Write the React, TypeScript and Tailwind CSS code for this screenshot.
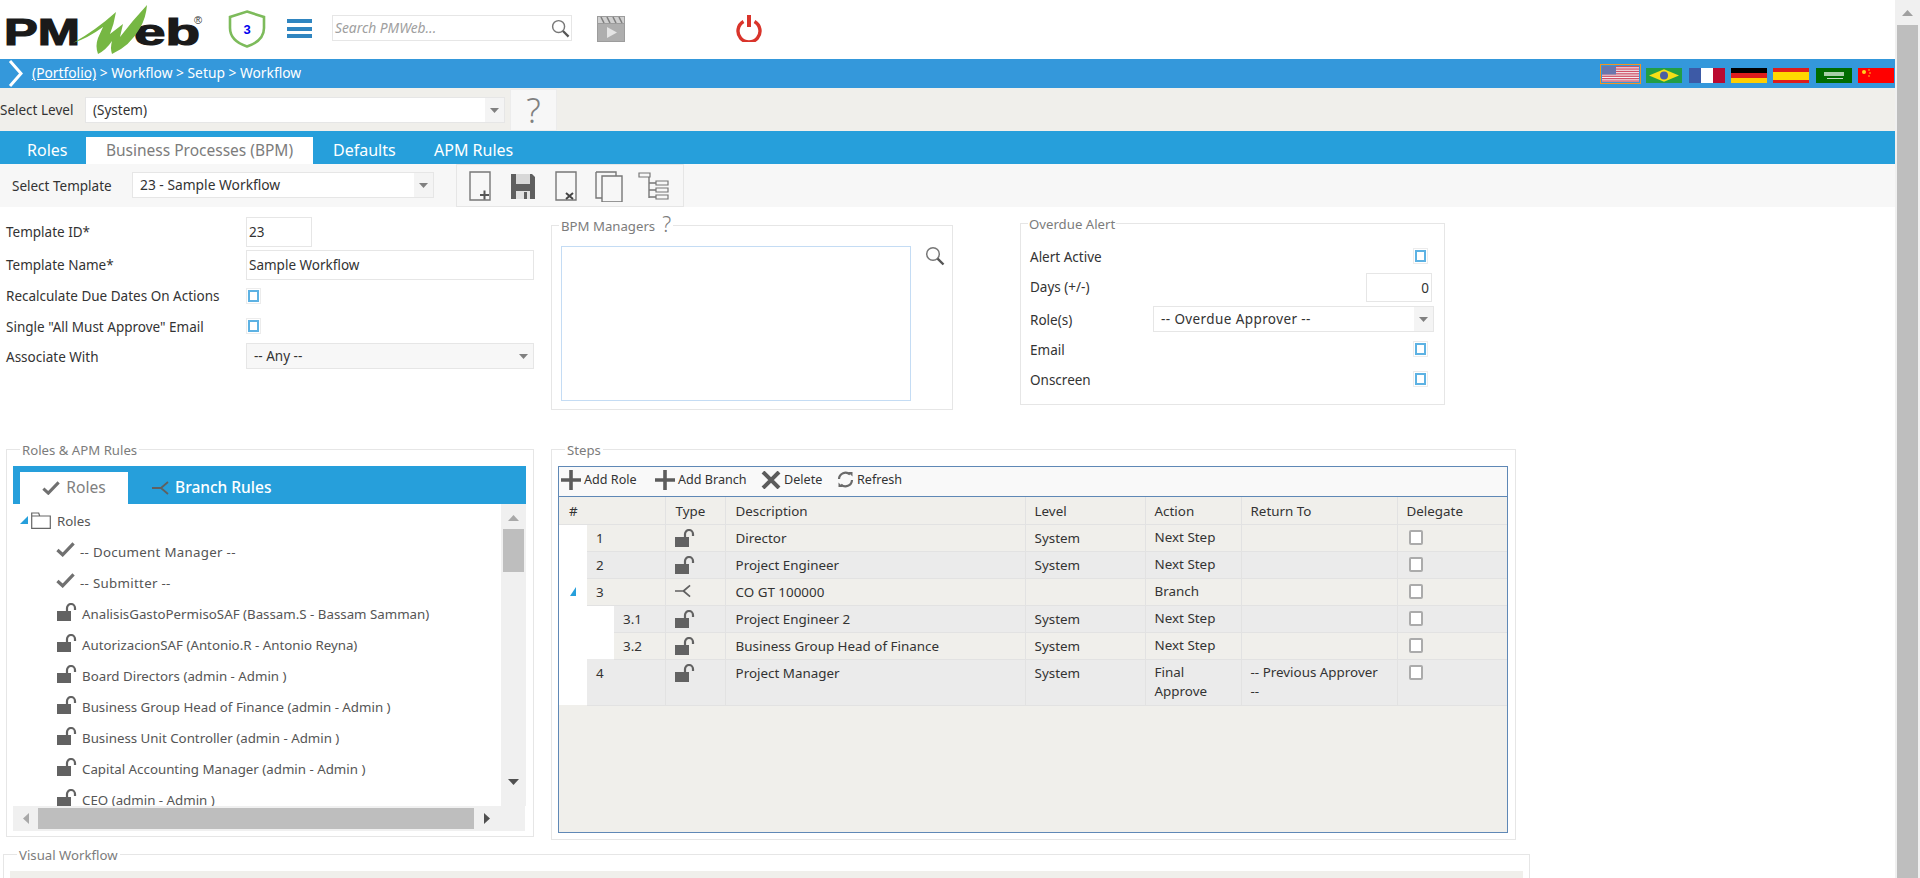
import React from "react";

const roleRows = [
  "AnalisisGastoPermisoSAF (Bassam.S - Bassam Samman)",
  "AutorizacionSAF (Antonio.R - Antonio Reyna)",
  "Board Directors (admin - Admin )",
  "Business Group Head of Finance (admin - Admin )",
  "Business Unit Controller (admin - Admin )",
  "Capital Accounting Manager (admin - Admin )",
  "CEO (admin - Admin )",
];

const steps = [
  { no: "1", desc: "Director", level: "System", action: "Next Step" },
  { no: "2", desc: "Project Engineer", level: "System", action: "Next Step" },
  { no: "3", desc: "CO GT 100000", level: "", action: "Branch", branch: true },
  { no: "3.1", desc: "Project Engineer 2", level: "System", action: "Next Step", sub: true },
  { no: "3.2", desc: "Business Group Head of Finance", level: "System", action: "Next Step", sub: true },
  { no: "4", desc: "Project Manager", level: "System", action: "Final Approve", ret: "-- Previous Approver --", tall: true },
];

function Lock({ className = "" }: { className?: string }) {
  return (
    <svg width="20" height="18" viewBox="0 0 20 18" className={className}>
      <rect x="0" y="8" width="14" height="10" fill="#626262" />
      <path d="M10 8V5a4 4 0 0 1 8 0v2" fill="none" stroke="#626262" strokeWidth="2.2" />
    </svg>
  );
}

function Check({ size = 20 }: { size?: number }) {
  return (
    <svg width={size} height={size * 0.8} viewBox="0 0 20 16">
      <path d="M1.5 8.5l5.5 5L18.5 1.500" fill="none" stroke="#707070" strokeWidth="3.4" />
    </svg>
  );
}

function BranchIcon({ w = 17, h = 14, color = "#606060" }: { w?: number; h?: number; color?: string }) {
  return (
    <svg width={w} height={h} viewBox="0 0 17 14">
      <path d="M0 7h9M9 7l7-6M9 7l7 6" fill="none" stroke={color} strokeWidth="1.8" />
    </svg>
  );
}

function Magnifier({ size = 20 }: { size?: number }) {
  return (
    <svg width={size} height={size} viewBox="0 0 20 20">
      <circle cx="8" cy="8" r="6.3" fill="none" stroke="#777" strokeWidth="1.5" />
      <path d="M12.6 12.6L18.5 18.5" stroke="#555" strokeWidth="2.4" />
    </svg>
  );
}

function Caret({ up, color = "#777", w = 11, h = 6 }: { up?: boolean; color?: string; w?: number; h?: number }) {
  return (
    <svg width={w} height={h} viewBox="0 0 11 6">
      <path d={up ? "M0 6L5.5 0L11 6Z" : "M0 0H11L5.5 6Z"} fill={color} />
    </svg>
  );
}

function Dropdown({ text, className, arrow = "bg-[#f4f4f4]", textClass = "text-[13.5px]" }: { text: string; className: string; arrow?: string; textClass?: string }) {
  return (
    <div className={`flex items-stretch border border-[#e6e6e6] ${className}`}>
      <div className={`flex-1 flex items-center pl-[7px] text-[#333] ${textClass}`}>{text}</div>
      <div className={`w-[19px] flex items-center justify-center ${arrow}`}>
        <Caret color="#808080" w={9} h={5} />
      </div>
    </div>
  );
}

function BlueCheck() {
  return (
    <div className="w-[15px] h-[16px] border border-[#ececec] flex items-center justify-center bg-white">
      <div className="w-[11px] h-[12px] border-2 border-[#5db2e3] bg-white" />
    </div>
  );
}

function Flags() {
  return (
    <div className="flex items-center h-full">
      <div className="w-[41px] h-[20px] border border-[#f5941f] flex items-center justify-center mr-[5px]">
        <svg width="37" height="16" viewBox="0 0 37 16">
          <rect width="37" height="16" fill="#f4f0f2" />
          {[0, 2.4, 4.8, 7.2, 9.6, 12, 14.4].map((y) => (
            <rect key={y} y={y} width="37" height="1.3" fill="#cf5068" />
          ))}
          <rect width="14" height="8.5" fill="#6a76ad" />
        </svg>
      </div>
      <svg width="36" height="15" viewBox="0 0 36 15" className="mr-[7px] mt-[3px]">
        <rect width="36" height="15" fill="#229e45" />
        <path d="M3 7.5L18 1.2L33 7.5L18 13.8Z" fill="#f6df17" />
        <circle cx="18" cy="7.5" r="4" fill="#4a5fa0" />
      </svg>
      <svg width="36" height="15" viewBox="0 0 36 15" className="mr-[6px] mt-[3px]">
        <rect width="12" height="15" fill="#3d5aa6" />
        <rect x="12" width="12" height="15" fill="#fff" />
        <rect x="24" width="12" height="15" fill="#bb0a30" />
      </svg>
      <svg width="36" height="15" viewBox="0 0 36 15" className="mr-[6px] mt-[3px]">
        <rect width="36" height="5" fill="#000" />
        <rect y="5" width="36" height="5" fill="#dd1c1c" />
        <rect y="10" width="36" height="5" fill="#ffce00" />
      </svg>
      <svg width="36" height="15" viewBox="0 0 36 15" className="mr-[7px] mt-[3px]">
        <rect width="36" height="15" fill="#dd1c1c" />
        <rect y="4" width="36" height="8" fill="#ffd800" />
      </svg>
      <svg width="36" height="15" viewBox="0 0 36 15" className="mr-[6px] mt-[3px]">
        <rect width="36" height="15" fill="#006c00" />
        <rect x="8" y="4" width="20" height="4" fill="#a8cfa8" />
        <rect x="11" y="10" width="16" height="1" fill="#c8e0c8" />
      </svg>
      <svg width="36" height="15" viewBox="0 0 36 15" className="mr-[1px] mt-[3px]">
        <rect width="36" height="15" fill="#ff0000" />
        <circle cx="6" cy="4" r="2" fill="#ffd21f" />
        <circle cx="11" cy="2" r="0.8" fill="#ffd21f" />
        <circle cx="12" cy="5" r="0.8" fill="#ffd21f" />
        <circle cx="11" cy="8" r="0.8" fill="#ffd21f" />
      </svg>
    </div>
  );
}

function Header() {
  return (
    <div className="h-[59px] bg-white flex items-start">
      <svg width="205" height="56" viewBox="0 0 205 56" className="shrink-0">
        <text x="4" y="45" textLength="76" lengthAdjust="spacingAndGlyphs" fontFamily="Liberation Sans" fontWeight="700" fontSize="36" fill="#1a1a1a" stroke="#1a1a1a" strokeWidth="1.2">PM</text>
        <text x="134" y="45" textLength="66" lengthAdjust="spacingAndGlyphs" fontFamily="Liberation Sans" fontWeight="700" fontSize="36" fill="#1a1a1a" stroke="#1a1a1a" strokeWidth="1.2">eb</text>
        <path d="M73 43Q96 30 116 12Q114 24 110 34L123 24L120 37Q133 20 147 5Q146 18 140 28Q130 46 112 54Q110 48 112 41Q106 50 98 54Q95 46 98 38L103 27Q88 38 73 43Z" fill="#76b743" />
        <text x="194" y="24" fontFamily="Liberation Sans" fontSize="11" fill="#333">®</text>
      </svg>
      <svg width="38" height="38" viewBox="0 0 38 38" className="ml-[23px] mt-[10px] shrink-0">
        <path d="M19 1.500L36 7V18C36 28 28 33.500 19 36.500C10 33.500 2 28 2 18V7Z" fill="#fff" stroke="#7dbb5b" strokeWidth="2.6" />
        <text x="19" y="24" textAnchor="middle" fontFamily="Liberation Sans" fontWeight="700" fontSize="13" fill="#0000ee">3</text>
      </svg>
      <div className="ml-[21px] mt-[19px] w-[25px] h-[19px] flex flex-col justify-between shrink-0">
        <div className="h-[4px] bg-[#2f85c0]" />
        <div className="h-[4px] bg-[#2f85c0]" />
        <div className="h-[4px] bg-[#2f85c0]" />
      </div>
      <div className="ml-[20px] mt-[15px] w-[240px] h-[26px] border border-[#e6e6e6] flex items-center justify-between pl-[2px] pr-[1px] shrink-0">
        <span className="italic text-[13.8px] text-[#a0a0a0]">Search PMWeb...</span>
        <Magnifier size={19} />
      </div>
      <svg width="28" height="26" viewBox="0 0 28 26" className="ml-[25px] mt-[16px] shrink-0">
        <rect width="28" height="26" fill="#9c9c9c" />
        <rect x="1" y="1" width="26" height="6" fill="#d0d0d0" />
        <path d="M4 1l3 6M10 1l3 6M16 1l3 6M22 1l3 6" stroke="#808080" strokeWidth="1.6" />
        <rect x="1" y="8" width="26" height="17" fill="#aeaeae" />
        <path d="M10 11L20 16.5L10 22Z" fill="#e4e4e4" />
      </svg>
      <svg width="28" height="28" viewBox="0 0 28 28" className="ml-[110px] mt-[14px] shrink-0">
        <path d="M8.5 7.5a11 11 0 1 0 11 0" fill="none" stroke="#d9342b" strokeWidth="3.4" />
        <rect x="12" y="1" width="4" height="12" fill="#d9342b" />
      </svg>
    </div>
  );
}

function Legend({ children }: { children: React.ReactNode }) {
  return <legend className="ml-[7px] px-[2px] h-[20px] leading-[23px] text-[13.2px] text-[#7c7c7c]">{children}</legend>;
}

function TopForm() {
  return (
    <div className="h-[232px] flex items-start">
      <div className="w-[551px] shrink-0 pl-[6px] pt-[10px] text-[13.5px] text-[#333]">
        <div className="flex h-[30px] items-center">
          <span className="w-[240px]">Template ID*</span>
          <input readOnly defaultValue="23" className="w-[66px] h-[30px] border border-[#e6e6e6] pl-[2px]" />
        </div>
        <div className="flex h-[30px] items-center mt-[3px]">
          <span className="w-[240px]">Template Name*</span>
          <input readOnly defaultValue="Sample Workflow" className="w-[288px] h-[30px] border border-[#e6e6e6] pl-[2px]" />
        </div>
        <div className="flex h-[16px] items-center mt-[8px]">
          <span className="w-[240px]">Recalculate Due Dates On Actions</span>
          <BlueCheck />
        </div>
        <div className="flex h-[16px] items-center mt-[14px]">
          <span className="w-[240px] pt-[2px]">Single "All Must Approve" Email</span>
          <BlueCheck />
        </div>
        <div className="flex h-[26px] items-center mt-[9px]">
          <span className="w-[240px] pt-[3px]">Associate With</span>
          <Dropdown text="-- Any --" className="w-[288px] h-[26px] bg-[#f7f7f7]" arrow="bg-[#f7f7f7]" />
        </div>
      </div>

      <fieldset className="w-[402px] h-[195px] mt-[8px] shrink-0 border border-[#e6e6e6]">
        <legend className="ml-[7px] px-[2px] h-[20px] leading-[23px] text-[13.2px] text-[#7c7c7c] flex items-start gap-[7px]">
          BPM Managers <span className="text-[21px] leading-[20px] -mt-[1px] font-light">?</span>
        </legend>
        <div className="flex items-start pl-[9px] mt-[11px]">
          <div className="w-[350px] h-[155px] border border-[#c4dcf4]" />
          <div className="ml-[14px]">
            <Magnifier size={20} />
          </div>
        </div>
      </fieldset>

      <fieldset className="w-[425px] h-[192px] ml-[67px] mt-[6px] shrink-0 border border-[#e6e6e6] text-[13.5px] text-[#333]">
        <legend className="ml-[7px] px-[1px] h-[20px] leading-[23px] text-[13.2px] text-[#7c7c7c]">Overdue Alert</legend>
        <div className="pl-[9px]">
          <div className="flex justify-between items-center h-[16px] mt-[15px] pr-[16px]">
            <span className="mt-[3px]">Alert Active</span>
            <BlueCheck />
          </div>
          <div className="flex justify-between items-center h-[29px] mt-[9px] pr-[12px]">
            <span>Days (+/-)</span>
            <input readOnly defaultValue="0" className="w-[66px] h-[29px] border border-[#e6e6e6] text-right pr-[2px]" />
          </div>
          <div className="flex items-center h-[26px] mt-[4px]">
            <span className="w-[123px] pt-[2px]">Role(s)</span>
            <Dropdown text="-- Overdue Approver --" className="w-[281px] h-[26px]" textClass="text-[13.5px] tracking-[0.4px]" />
          </div>
          <div className="flex justify-between items-center h-[16px] mt-[9px] pr-[16px]">
            <span className="mt-[3px]">Email</span>
            <BlueCheck />
          </div>
          <div className="flex justify-between items-center h-[16px] mt-[14px] pr-[16px]">
            <span className="mt-[3px]">Onscreen</span>
            <BlueCheck />
          </div>
        </div>
      </fieldset>
    </div>
  );
}

function RolesPanel() {
  return (
    <fieldset className="w-[528px] h-[398px] ml-[6px] shrink-0 border border-[#e6e6e6] px-[6px]">
      <Legend>Roles &amp; APM Rules</Legend>
      <div className="mt-[7px] w-[513px]">
        <div className="h-[38px] bg-[#269fdb] flex items-end pl-[7px]">
          <div className="w-[108px] h-[32px] bg-white flex items-center justify-center gap-[6px] text-[15.6px] text-[#808080]">
            <Check size={18} /> Roles
          </div>
          <div className="h-[32px] ml-[24px] flex items-center gap-[6px] text-[15.5px] text-white font-medium">
            <BranchIcon w={17} h={14} /> Branch Rules
          </div>
        </div>
        <div className="flex h-[302px]">
          <div className="w-[487px] overflow-hidden text-[13.3px] text-[#555]">
            <div className="h-[33px] flex items-center pl-[7px] pt-[2px]">
              <svg width="8" height="8" viewBox="0 0 8 8" className="-mt-[4px]"><path d="M8 0V8H0Z" fill="#269fdb" /></svg>
              <svg width="20" height="17" viewBox="0 0 20 17" className="ml-[3px] -mt-[3px]">
                <path d="M.7 16.3V1h7l1 3h10.6v12.3ZM.7 4h8" fill="none" stroke="#666" strokeWidth="1.2" />
              </svg>
              <span className="ml-[6px]">Roles</span>
            </div>
            {["-- Document Manager --", "-- Submitter --"].map((r) => (
              <div key={r} className="h-[31px] flex items-center pl-[43px]">
                <span className="-mt-[6px]"><Check size={19} /></span>
                <span className="ml-[5px] tracking-[0.3px]">{r}</span>
              </div>
            ))}
            {roleRows.map((r) => (
              <div key={r} className="h-[31px] flex items-center pl-[44px] whitespace-nowrap">
                <Lock className="-mt-[6px] shrink-0" />
                <span className="ml-[5px]">{r}</span>
              </div>
            ))}
          </div>
          <div className="w-[25px] ml-[1px] bg-[#f0f0f0] flex flex-col items-center">
            <div className="h-[25px] flex items-center justify-center pt-[2px]"><Caret up color="#a8a8a8" /></div>
            <div className="w-[21px] h-[43px] bg-[#bebebe]" />
            <div className="flex-1" />
            <div className="h-[27px] flex items-start justify-center"><Caret color="#505050" /></div>
          </div>
        </div>
        <div className="h-[25px] bg-[#f0f0f0] flex items-center w-[512px]">
          <div className="w-[25px] flex justify-center">
            <svg width="6" height="11" viewBox="0 0 6 11"><path d="M6 0V11L0 5.5Z" fill="#a8a8a8" /></svg>
          </div>
          <div className="w-[436px] h-[21px] bg-[#bebebe]" />
          <div className="w-[26px] flex justify-center">
            <svg width="6" height="11" viewBox="0 0 6 11"><path d="M0 0V11L6 5.5Z" fill="#505050" /></svg>
          </div>
        </div>
      </div>
    </fieldset>
  );
}

function ToolButton({ icon, label, className }: { icon: React.ReactNode; label: string; className: string }) {
  return (
    <div className={`flex items-center ${className}`}>
      {icon}
      <span className="ml-[3px]">{label}</span>
    </div>
  );
}

const PlusIcon = (
  <svg width="20" height="20" viewBox="0 0 20 20">
    <path d="M10 0V20M0 10H20" stroke="#5c5c5c" strokeWidth="3.6" />
  </svg>
);

const XIcon = (
  <svg width="20" height="18" viewBox="0 0 20 18">
    <path d="M2 1L18 17M18 1L2 17" stroke="#5c5c5c" strokeWidth="4" />
  </svg>
);

const RefreshIcon = (
  <svg width="17" height="17" viewBox="0 0 17 17">
    <path d="M2 8a6.5 6.5 0 0 1 11-4.500M15 9a6.500 6.500 0 0 1-11 4.500" fill="none" stroke="#6a6a6a" strokeWidth="2.2" />
    <path d="M11 1h4.500v4.500ZM6 16H1.500v-4.500Z" fill="#6a6a6a" />
  </svg>
);

function StepsPanel() {
  const cell = "border-l border-b border-[#e2e2e2] align-top pl-[9px] pt-[4px]";
  return (
    <fieldset className="w-[965px] h-[401px] ml-[17px] shrink-0 border border-[#e6e6e6] pl-[6px] pr-[7px]">
      <Legend>Steps</Legend>
      <div className="mt-[7px] h-[367px] border border-[#5f88b6] bg-[#f0efeb] text-[13.4px] text-[#333]">
        <div className="h-[30px] bg-[#f9f9f9] border-b border-[#5f88b6] flex items-center pl-[1px] pb-[3px] text-[12.6px]">
          <ToolButton icon={PlusIcon} label="Add Role" className="w-[95px] ml-[1px]" />
          <ToolButton icon={PlusIcon} label="Add Branch" className="w-[106px] -ml-[1px]" />
          <ToolButton icon={XIcon} label="Delete" className="w-[76px]" />
          <ToolButton icon={RefreshIcon} label="Refresh" className="" />
        </div>
        <table className="w-full table-fixed border-collapse">
          <colgroup>
            <col className="w-[28px]" />
            <col className="w-[27px]" />
            <col className="w-[51px]" />
            <col className="w-[60px]" />
            <col className="w-[300px]" />
            <col className="w-[120px]" />
            <col className="w-[96px]" />
            <col className="w-[156px]" />
            <col />
          </colgroup>
          <thead>
            <tr className="h-[27px] text-left">
              <th colSpan={3} className="font-normal border-b border-[#e2e2e2] pl-[10px] pt-[2px]">#</th>
              {["Type", "Description", "Level", "Action", "Return To", "Delegate"].map((h) => (
                <th key={h} className={`font-normal border-l border-b border-[#e2e2e2] pt-[2px] ${h === "Type" || h === "Description" ? "pl-[10px]" : "pl-[9px]"}`}>{h}</th>
              ))}
            </tr>
          </thead>
          <tbody>
            {steps.map((s, i) => (
              <tr key={s.no} className={`${s.tall ? "h-[46px]" : "h-[27px]"} ${i % 2 === 0 ? "bg-[#f0efeb]" : "bg-[#ebebeb]"}`}>
                <td className="bg-white text-center">
                  {s.branch && (
                    <svg width="8" height="9" viewBox="0 0 8 9" className="inline-block mb-[2px]"><path d="M7 0V9H1Z" fill="#269fdb" /></svg>
                  )}
                </td>
                {s.sub ? (
                  <>
                    <td className="bg-white" />
                    <td className="border-b border-[#e2e2e2] pl-[9px] pt-[3px] align-top">{s.no}</td>
                  </>
                ) : (
                  <td colSpan={2} className="border-b border-[#e2e2e2] pl-[9px] pt-[3px] align-top">{s.no}</td>
                )}
                <td className={`${cell} !pl-[9px]`}>
                  {s.branch ? <span className="block mt-[1px]"><BranchIcon w={16} h={14} /></span> : <Lock />}
                </td>
                <td className={`${cell} !pl-[10px] !pt-[3px]`}>{s.desc}</td>
                <td className={`${cell} !pt-[3px]`}>{s.level}</td>
                <td className={`${cell} !pt-[3px] pr-[16px] leading-[19px]`}>{s.action}</td>
                <td className={`${cell} !pt-[3px] pr-[14px] leading-[19px]`}>{s.ret}</td>
                <td className={`${cell} !pl-[11px] !pt-[5px]`}>
                  <div className="w-[14px] h-[15px] border-2 border-[#ababab] rounded-[2px] bg-white" />
                </td>
              </tr>
            ))}
          </tbody>
        </table>
      </div>
    </fieldset>
  );
}

export default function App() {
  return (
    <div className="flex h-[878px] overflow-hidden bg-white font-['Noto_Sans','Open_Sans',sans-serif]">
      <div className="w-[1895px] shrink-0">
        <Header />

        <div className="h-[29px] bg-[#3498db] flex items-center justify-between text-white text-[13.8px]">
          <div className="flex items-center">
            <svg width="16" height="27" viewBox="0 0 16 27" className="ml-[8px]">
              <path d="M2 1L13 13.5L2 26" fill="none" stroke="#fff" strokeWidth="3" />
            </svg>
            <span className="ml-[8px]"><span className="underline">(Portfolio)</span> &gt; Workflow &gt; Setup &gt; Workflow</span>
          </div>
          <Flags />
        </div>

        <div className="h-[43px] bg-[#f0efeb] flex items-start text-[13.5px] text-[#333]">
          <span className="w-[85px] h-[43px] leading-[45px]">Select Level</span>
          <Dropdown text="(System)" className="w-[420px] h-[26px] mt-[9px] bg-white" />
          <div className="ml-[5px] mt-[1px] w-[47px] h-[42px] bg-[#f7f7f7] border border-[#ececec] flex items-center justify-center text-[34px] font-light text-[#808080]">?</div>
        </div>

        <div className="h-[33px] bg-[#269fdb] flex items-end text-[16px] text-white">
          <div className="w-[86px] pl-[27px] h-[27px] leading-[27px]">Roles</div>
          <div className="w-[227px] h-[27px] leading-[27px] bg-white text-[#7c7c7c] text-center text-[15.5px]">Business Processes (BPM)</div>
          <div className="ml-[20px] w-[101px] h-[27px] leading-[27px]">Defaults</div>
          <div className="h-[27px] leading-[27px]">APM Rules</div>
        </div>

        <div className="h-[43px] bg-[#f7f7f7] flex items-start text-[13.5px] text-[#333]">
          <span className="ml-[12px] w-[120px] h-[43px] leading-[45px]">Select Template</span>
          <Dropdown text="23 - Sample Workflow" className="w-[302px] h-[26px] mt-[8px] bg-white" textClass="text-[13.8px]" />
          <div className="ml-[22px] w-[228px] h-[43px] border border-[#e6e6e6] flex items-center pl-[12px]">
            <svg width="212" height="32" viewBox="0 0 212 32">
              <g fill="none" stroke="#777" strokeWidth="1.4">
                <path d="M1 2H21V30H1Z" />
                <path d="M87 2H107V30H87Z" />
                <path d="M127 2H147V6M127 2V28H133" />
                <path d="M133 6H153V32H133Z" />
                <path d="M180 7V28M180 13H187M180 20H187M180 27H187" />
                <path d="M170 3H181V7H170ZM187 11H199V15H187ZM187 18H199V22H187ZM187 25H199V29H187Z" strokeWidth="1.2" />
              </g>
              <path d="M11 25H20M15.500 20.500V29.500" stroke="#555" strokeWidth="2" />
              <path d="M97 23L104 29M104 23L97 29" stroke="#444" strokeWidth="2" />
              <path d="M42 4H63L66 7V29H42Z" fill="#5f5f5f" />
              <rect x="47" y="4" width="14" height="10" fill="#d8d8d8" />
              <rect x="47" y="21" width="14" height="8" fill="#e2e2e2" />
              <rect x="55" y="22" width="3" height="7" fill="#5f5f5f" />
            </svg>
          </div>
        </div>

        <TopForm />

        <div className="h-[405px] flex items-start">
          <RolesPanel />
          <StepsPanel />
        </div>

        <fieldset className="w-[1527px] ml-[3px] h-[60px] border border-[#e6e6e6] pl-[6px]">
          <Legend>Visual Workflow</Legend>
          <div className="mt-[7px] w-[1513px] h-[30px] bg-[#f0efeb]" />
        </fieldset>
      </div>

      <div className="w-[25px] shrink-0 bg-[#f0f0f0] flex flex-col items-center">
        <div className="h-[25px] flex items-center justify-center"><Caret up color="#a0a0a0" /></div>
        <div className="w-[21px] flex-1 bg-[#bebebe]" />
      </div>
    </div>
  );
}
